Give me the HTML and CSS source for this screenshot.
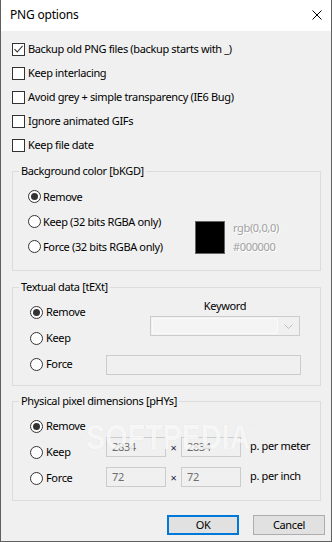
FILE: index.html
```html
<!DOCTYPE html>
<html>
<head>
<meta charset="utf-8">
<title>PNG options</title>
<link rel="stylesheet" href="styles.css">
</head>
<body>
<div class="window">
  <div class="titlebar">
    <span class="title">PNG options</span>
    <svg class="close" width="10" height="10" viewBox="0 0 10 10"><path d="M0.5 0.5L9.5 9.5M9.5 0.5L0.5 9.5" stroke="#000" stroke-width="1" fill="none"/></svg>
  </div>
  <div class="content">
    <div class="checks">
      <div class="check"><span class="box"><svg width="11" height="11" viewBox="0 0 11 11"><path d="M1.5 5.2L4.2 8 9.6 1.8" stroke="#333" stroke-width="1.1" fill="none"/></svg></span>Backup old PNG files (backup starts with _)</div>
      <div class="check"><span class="box"></span>Keep interlacing</div>
      <div class="check"><span class="box"></span>Avoid grey + simple transparency (IE6 Bug)</div>
      <div class="check"><span class="box"></span>Ignore animated GIFs</div>
      <div class="check"><span class="box"></span>Keep file date</div>
    </div>

    <fieldset class="group g1">
      <legend>Background color [bKGD]</legend>
      <div class="bkgd-body">
        <div class="radios">
          <div class="radio-row"><span class="radio on"></span>Remove</div>
          <div class="radio-row"><span class="radio"></span>Keep (32 bits RGBA only)</div>
          <div class="radio-row"><span class="radio"></span>Force (32 bits RGBA only)</div>
        </div>
        <div class="swatch-area">
          <div class="swatch"></div>
          <div class="swatch-text"><div>rgb(0,0,0)</div><div>#000000</div></div>
        </div>
      </div>
    </fieldset>

    <fieldset class="group g2">
      <legend>Textual data [tEXt]</legend>
      <div class="text-body">
        <div class="radio-row r1"><span class="radio on"></span>Remove</div>
        <div class="radio-row r2"><span class="radio"></span>Keep</div>
        <div class="radio-row r3"><span class="radio"></span>Force</div>
        <div class="keyword">
          <div class="kw-label">Keyword</div>
          <div class="combo"><span class="combo-field"></span><span class="combo-btn"><svg width="9" height="5" viewBox="0 0 9 5"><path d="M0.5 0.5L4.5 4.5 8.5 0.5" stroke="#bdbdbd" stroke-width="1" fill="none"/></svg></span></div>
        </div>
        <div class="field wide"></div>
      </div>
    </fieldset>

    <fieldset class="group g3">
      <legend>Physical pixel dimensions [pHYs]</legend>
      <div class="phys-body">
        <div class="radio-col">
          <div class="radio-row"><span class="radio on"></span>Remove</div>
          <div class="radio-row"><span class="radio"></span>Keep</div>
          <div class="radio-row"><span class="radio"></span>Force</div>
        </div>
        <div class="dims">
          <div class="dim-row"><div class="field num">2834</div><span class="times">×</span><div class="field num">2834</div><span class="unit">p. per meter</span></div>
          <div class="dim-row"><div class="field num">72</div><span class="times">×</span><div class="field num">72</div><span class="unit">p. per inch</span></div>
        </div>
      </div>
    </fieldset>

    <div class="buttons">
      <div class="btn default">OK</div>
      <div class="btn">Cancel</div>
    </div>
  </div>
  <div class="watermark">SOFTPEDIA<sup>®</sup></div>
</div>
</body>
</html>
```

FILE: styles.css
```css
* { box-sizing: border-box; }
html, body { margin: 0; padding: 0; }
body {
  width: 332px;
  height: 542px;
  font-family: "Noto Sans", "Open Sans", sans-serif;
  font-size: 11px;
  letter-spacing: -0.35px;
  color: #000;
  background: #f0f0f0;
  overflow: hidden;
}
.window {
  position: relative;
  width: 332px;
  height: 542px;
  border: 1px solid #5f5f5f;
  border-top: none;
  display: flex;
  flex-direction: column;
  background: #f0f0f0;
}
.titlebar {
  flex: none;
  height: 31px;
  background: #fff;
  display: flex;
  align-items: center;
  justify-content: space-between;
  padding: 0 9px 1px 9px;
}
.title { font-size: 12px; line-height: 16px; letter-spacing: -0.2px; }
.close { display: block; }

.content {
  flex: 1;
  display: flex;
  flex-direction: column;
  padding: 6px 10px 0 11px;
}
.checks { display: flex; flex-direction: column; }
.check {
  height: 24px;
  display: flex;
  align-items: center;
  gap: 3px;
  line-height: 16px;
  white-space: nowrap;
}
.box {
  width: 13px;
  height: 13px;
  border: 1px solid #333;
  background: #fff;
  display: flex;
  align-items: center;
  justify-content: center;
  flex: none;
}
.box svg { display: block; }

.group {
  margin: 0;
  padding: 0;
  border: 1px solid #dcdcdc;
  min-width: 0;
}
.group legend {
  margin-left: 6px;
  padding: 0 2px;
  line-height: 16px;
}
.g1 { margin-top: 6px; }
.g2 { margin-top: 8px; }
.g3 { margin-top: 7px; }

.radio-row {
  display: flex;
  align-items: center;
  line-height: 16px;
  gap: 3px;
  white-space: nowrap;
}
.radio {
  width: 13px;
  height: 13px;
  border: 1px solid #333;
  border-radius: 50%;
  background: #fff;
  display: flex;
  align-items: center;
  justify-content: center;
  flex: none;
}
.radio.on::after {
  content: "";
  width: 7px;
  height: 7px;
  border-radius: 50%;
  background: #333;
}

/* Background color group */
.bkgd-body {
  display: flex;
  padding: 5px 0 11px 15px;
}
.radios {
  width: 167px;
  flex: none;
  display: flex;
  flex-direction: column;
}
.g1 .radio-row { height: 25px; gap: 2px; }
.swatch-area {
  display: flex;
  align-items: flex-start;
  margin-top: 37px;
}
.swatch {
  width: 30px;
  height: 33px;
  border: 1px solid #646464;
  background: #000;
  flex: none;
}
.swatch-text {
  margin-left: 8px;
  margin-top: -3px;
  line-height: 19px;
  color: #a0a0a0;
  text-shadow: 1px 1px 0 #fff;
}

/* Textual data group */
.text-body {
  display: grid;
  grid-template-columns: 76px 195px;
  grid-template-rows: 26px 26px 26px;
  padding: 4px 19px 8px 17px;
}
.text-body .r1 { grid-row: 1; grid-column: 1; }
.text-body .r2 { grid-row: 2; grid-column: 1; }
.text-body .r3 { grid-row: 3; grid-column: 1; }
.keyword {
  grid-row: 1 / 3;
  grid-column: 2;
  justify-self: end;
  align-self: start;
  width: 150px;
  margin-right: 1px;
  margin-top: -1px;
  display: flex;
  flex-direction: column;
  align-items: center;
}
.kw-label { line-height: 16px; }
.combo {
  margin-top: 2px;
  width: 150px;
  height: 20px;
  border: 1px solid #cccccc;
  background: #f0f0f0;
  display: flex;
}
.combo-field {
  flex: 1;
  margin: 1px 0 1px 1px;
  background: #f4f4f4;
  border: 1px solid #fafafa;
}
.combo-btn {
  width: 21px;
  display: flex;
  align-items: center;
  justify-content: center;
  padding-top: 1px;
}
.combo-btn svg { display: block; }
.field {
  height: 20px;
  border: 1px solid #cccccc;
  background: #f0f0f0;
  color: #6d6d6d;
  line-height: 18px;
  padding-left: 5px;
  flex: none;
}
.wide {
  grid-row: 3;
  grid-column: 2;
  align-self: center;
  width: 195px;
  margin-top: 2px;
}

/* Physical dims group */
.phys-body {
  display: flex;
  padding: 4px 0 9px 17px;
}
.radio-col {
  width: 76px;
  flex: none;
  display: flex;
  flex-direction: column;
}
.g3 .radio-row { height: 26px; }
.dims {
  display: flex;
  flex-direction: column;
  gap: 10px;
  padding-top: 24px;
}
.dim-row {
  display: flex;
  align-items: center;
  height: 20px;
  white-space: nowrap;
}
.num { width: 60px; }
.times {
  width: 15px;
  text-align: center;
  color: #1d2540;
  flex: none;
}
.unit {
  margin-left: 9px;
  margin-top: -2px;
  line-height: 16px;
}

/* Buttons */
.buttons {
  display: flex;
  justify-content: flex-end;
  gap: 14px;
  margin-top: 14px;
  margin-right: -4px;
}
.btn {
  width: 72px;
  height: 20px;
  border: 1px solid #adadad;
  background: #e1e1e1;
  display: flex;
  align-items: center;
  justify-content: center;
  line-height: 16px;
}
.btn.default { border: 2px solid #0078d7; }

.watermark {
  position: absolute;
  left: 85px;
  top: 417px;
  font-family: "Liberation Sans", sans-serif;
  font-weight: bold;
  font-size: 35px;
  letter-spacing: 0;
  color: rgba(255, 255, 255, 0.8);
  text-shadow: 0 0 1px rgba(0, 0, 0, 0.1);
  transform: scaleX(0.82);
  transform-origin: left top;
  pointer-events: none;
}
.watermark sup {
  font-size: 10px;
  vertical-align: top;
  position: relative;
  top: 3px;
}
```
